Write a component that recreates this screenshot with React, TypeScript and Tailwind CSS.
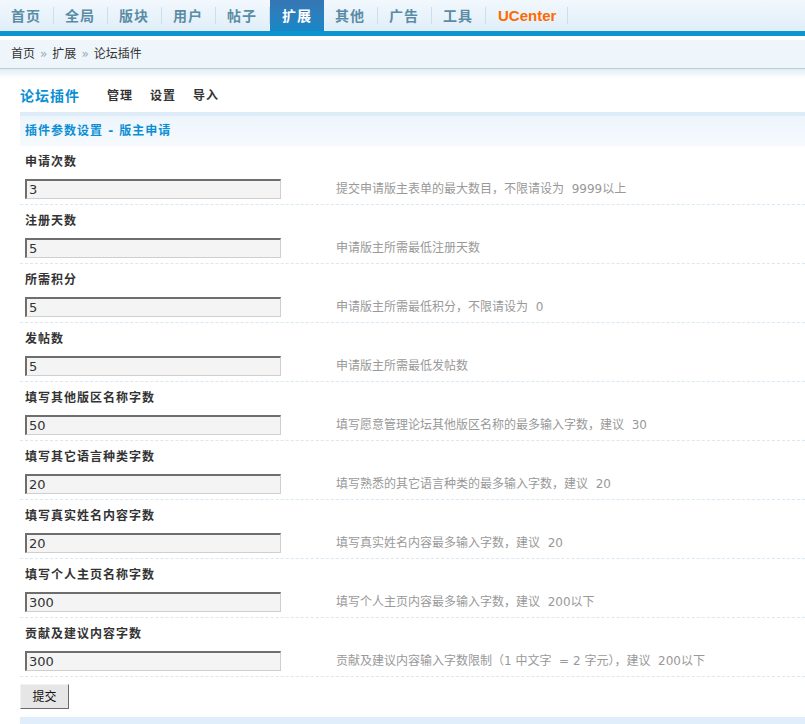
import React from "react";

type Row = { label: string; value: string; tip: string };

const rows: Row[] = [
  { label: "申请次数", value: "3", tip: "提交申请版主表单的最大数目，不限请设为  9999以上" },
  { label: "注册天数", value: "5", tip: "申请版主所需最低注册天数" },
  { label: "所需积分", value: "5", tip: "申请版主所需最低积分，不限请设为  0" },
  { label: "发帖数", value: "5", tip: "申请版主所需最低发帖数" },
  { label: "填写其他版区名称字数", value: "50", tip: "填写愿意管理论坛其他版区名称的最多输入字数，建议  30" },
  { label: "填写其它语言种类字数", value: "20", tip: "填写熟悉的其它语言种类的最多输入字数，建议  20" },
  { label: "填写真实姓名内容字数", value: "20", tip: "填写真实姓名内容最多输入字数，建议  20" },
  { label: "填写个人主页名称字数", value: "300", tip: "填写个人主页内容最多输入字数，建议  200以下" },
  { label: "贡献及建议内容字数", value: "300", tip: "贡献及建议内容输入字数限制（1 中文字  = 2 字元），建议  200以下" },
];

const navItems = ["首页", "全局", "版块", "用户", "帖子", "扩展", "其他", "广告", "工具"];

const TopNav = () => (
  <div className="flex h-[31px] bg-gradient-to-b from-[#f2f8fd] to-[#e0eef9]">
    {navItems.map((item) =>
      item === "扩展" ? (
        <div
          key={item}
          className="flex h-full w-[54px] items-center justify-center bg-gradient-to-b from-[#3576b3] to-[#1688c7] text-[14px] font-bold leading-none tracking-[1px] text-white"
        >
          {item}
        </div>
      ) : (
        <div key={item} className="flex h-full items-center">
          <span className="pl-[11px] pr-[12px] text-[14px] font-bold leading-none tracking-[1px] text-[#5a8ca5]">
            {item}
          </span>
          <span className="h-[17px] w-px bg-[#cddfed]" />
        </div>
      )
    )}
    <div className="flex h-full items-center">
      <span className="pl-[12px] pr-[11px] font-['Liberation_Sans',sans-serif] text-[15px] font-bold leading-none text-[#ff6a00]">
        UCenter
      </span>
      <span className="h-[17px] w-px bg-[#cddfed]" />
    </div>
  </div>
);

const SettingRow = ({ row }: { row: Row }) => (
  <div className="border-b border-dashed border-[#d9e8f3]">
    <div className="h-[28px] pl-[5px] pt-[9px] text-[12px] font-bold leading-[14px] tracking-[1px] text-[#333]">
      {row.label}
    </div>
    <div className="flex items-center pb-[5px] pl-[5px] pt-[5px]">
      <div className="flex h-[20px] w-[256px] items-center border-b border-l-2 border-r border-t-2 border-b-[#cfcfcf] border-l-[#6e6e6e] border-r-[#cfcfcf] border-t-[#6e6e6e] bg-[#f4f4f4] pl-[2px] text-[13px] leading-none text-[#333]">
        {row.value}
      </div>
      <div className="ml-[55px] whitespace-pre text-[12px] leading-none text-[#999]">{row.tip}</div>
    </div>
  </div>
);

export default function App() {
  return (
    <div className="h-[724px] w-[805px] overflow-hidden bg-white font-['DejaVu_Sans','Noto_Sans_CJK_SC',sans-serif]">
      <TopNav />
      <div className="h-[5px] bg-[#0b96cf]" />
      <div className="h-[4px] bg-white" />
      <div className="flex h-[29px] items-center gap-[5px] border-b border-[#b8cdda] bg-[#eef6fc] pl-[11px] text-[12px] leading-none text-[#333]">
        <span>首页</span>
        <span className="text-[#9aa9b4]">»</span>
        <span>扩展</span>
        <span className="text-[#9aa9b4]">»</span>
        <span>论坛插件</span>
      </div>
      <div className="h-[9px] bg-gradient-to-b from-[#e2ecf4] to-white" />

      <div className="pl-[20px]">
        <div className="flex h-[34px] items-center pt-[2px]">
          <span className="text-[14px] font-bold leading-none tracking-[1px] text-[#0b8fd4]">论坛插件</span>
          <span className="ml-[27px] text-[12px] font-bold leading-none tracking-[1px] text-[#333]">管理</span>
          <span className="ml-[17px] text-[12px] font-bold leading-none tracking-[1px] text-[#333]">设置</span>
          <span className="ml-[17px] text-[12px] font-bold leading-none tracking-[1px] text-[#333]">导入</span>
        </div>

        <div className="flex h-[34px] items-center border-t-4 border-[#deecf7] bg-gradient-to-b from-[#edf5fc] to-[#f6fafe] pl-[5px] text-[12px] font-bold leading-none tracking-[1px] text-[#0b8fd4]">
          插件参数设置 - 版主申请
        </div>

        {rows.map((row) => (
          <SettingRow key={row.label} row={row} />
        ))}

        <div className="pb-[8px] pt-[7px]">
          <button className="flex h-[25px] w-[49px] items-center justify-center border border-b-[#6a6a6a] border-l-[#f2f2f2] border-r-[#6a6a6a] border-t-[#f2f2f2] bg-[#e6e6e6] text-[12px] leading-none text-[#111]">
            提交
          </button>
        </div>
        <div className="h-[7px] bg-[#dfeefa]" />
      </div>
    </div>
  );
}
